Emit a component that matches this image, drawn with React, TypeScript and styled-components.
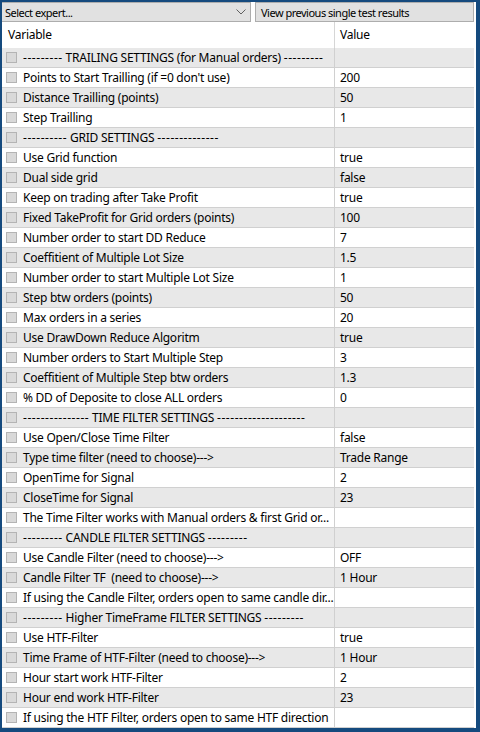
import { FC, Fragment } from 'react';
import styled, { createGlobalStyle } from 'styled-components';

const GlobalStyle = createGlobalStyle`
    html, body {
        margin: 0;
        padding: 0;
        background: #ffffff;
    }
    body {
        font-family: 'Noto Sans', 'Liberation Sans', sans-serif;
        font-size: 12px;
        color: #000000;
    }
`;

const Window = styled.div`
    width: 480px;
    height: 732px;
    box-sizing: border-box;
    border-top: 2px solid #154a7e;
    border-left: 2px solid #154a7e;
    border-right: 4px solid #154a7e;
    border-bottom: 4px solid #154a7e;
    display: flex;
    flex-direction: column;
    background: #ffffff;
    overflow: hidden;
`;

const Toolbar = styled.div`
    height: 20px;
    display: flex;
    gap: 4px;
    padding-right: 2px;
    background: #ffffff;
`;

const SelectBox = styled.div`
    width: 251px;
    box-sizing: border-box;
    border: 1px solid #adadad;
    background: #e1e1e1;
    display: flex;
    align-items: center;
    justify-content: space-between;
    padding: 0 4px 0 4px;
    margin-left: -2px;
`;

const ToolButton = styled.div`
    flex: 1;
    box-sizing: border-box;
    border: 1px solid #adadad;
    background: #e1e1e1;
    display: flex;
    align-items: center;
    padding-left: 5px;
`;

const Label = styled.span`
    font-size: 11px;
    line-height: 1;
    white-space: nowrap;
    letter-spacing: -0.5px;
`;

const Grid = styled.div`
    display: grid;
    grid-template-columns: 333px 1fr;
    margin-right: 2px;
`;

const HeadCell = styled.div<{ $first?: boolean }>`
    height: 26px;
    box-sizing: border-box;
    display: flex;
    align-items: center;
    padding-left: ${p => (p.$first ? '6px' : '5px')};
    padding-bottom: 1px;
    border-right: ${p => (p.$first ? '1px solid #d6d6d6' : 'none')};
    font-size: 12px;
    letter-spacing: -0.25px;
    white-space: nowrap;
`;

const Cell = styled.div<{ $shade: boolean; $first?: boolean }>`
    height: 20px;
    box-sizing: border-box;
    display: flex;
    align-items: center;
    gap: 6px;
    padding-left: ${p => (p.$first ? '4px' : '5px')};
    background: ${p => (p.$shade ? '#e8e8e8' : '#ffffff')};
    border-bottom: 1px solid #d0d0d0;
    border-right: ${p => (p.$first ? '1px solid #d0d0d0' : 'none')};
    font-size: 12px;
    letter-spacing: -0.25px;
    white-space: nowrap;
    overflow: hidden;
`;

const Dashes = styled.span`
    letter-spacing: 0.55px;
`;

const Check = styled.span`
    width: 11px;
    height: 11px;
    flex: none;
    box-sizing: border-box;
    border: 1px solid #b4b4b4;
    background: #d9d9d9;
`;

type Row = [string, string];

const rows: Row[] = [
    ['--------- TRAILING SETTINGS (for Manual orders) ---------', ''],
    ["Points to Start Trailling (if =0 don't use)", '200'],
    ['Distance Trailling (points)', '50'],
    ['Step Trailling', '1'],
    ['---------- GRID SETTINGS --------------', ''],
    ['Use Grid function', 'true'],
    ['Dual side grid', 'false'],
    ['Keep on trading after Take Profit', 'true'],
    ['Fixed TakeProfit for Grid orders (points)', '100'],
    ['Number order to start DD Reduce', '7'],
    ['Coeffitient of Multiple Lot Size', '1.5'],
    ['Number order to start Multiple Lot Size', '1'],
    ['Step btw orders (points)', '50'],
    ['Max orders in a series', '20'],
    ['Use DrawDown Reduce Algoritm', 'true'],
    ['Number orders to Start Multiple Step', '3'],
    ['Coeffitient of Multiple Step btw orders', '1.3'],
    ['% DD of Deposite to close ALL orders', '0'],
    ['--------------- TIME FILTER SETTINGS --------------------', ''],
    ['Use Open/Close Time Filter', 'false'],
    ['Type time filter (need to choose)--->', 'Trade Range'],
    ['OpenTime for Signal', '2'],
    ['CloseTime for Signal', '23'],
    ['The Time Filter works with Manual orders & first Grid or...', ''],
    ['--------- CANDLE FILTER SETTINGS ---------', ''],
    ['Use Candle Filter (need to choose)--->', 'OFF'],
    ['Candle Filter TF \u00a0(need to choose)--->', '1 Hour'],
    ['If using the Candle Filter, orders open to same candle dir...', ''],
    ['--------- Higher TimeFrame FILTER SETTINGS ---------', ''],
    ['Use HTF-Filter', 'true'],
    ['Time Frame of HTF-Filter (need to choose)--->', '1 Hour'],
    ['Hour start work HTF-Filter', '2'],
    ['Hour end work HTF-Filter', '23'],
    ['If using the HTF Filter, orders open to same HTF direction', ''],
];

// section headers use long dash runs, which are wider in the original font
const renderName = (name: string) =>
    name.split(/(-{4,})/).map((part, j) =>
        /^-{4,}$/.test(part) ? <Dashes key={j}>{part}</Dashes> : <Fragment key={j}>{part}</Fragment>,
    );

const Chevron: FC = () => (
    <svg width="10" height="6" viewBox="0 0 10 6">
        <path d="M0.5 0.5 L5 5 L9.5 0.5" fill="none" stroke="#606060" strokeWidth="1" />
    </svg>
);

export default function App() {
    return (
        <>
            <GlobalStyle />
            <Window>
                <Toolbar>
                    <SelectBox>
                        <Label>Select expert...</Label>
                        <Chevron />
                    </SelectBox>
                    <ToolButton>
                        <Label>View previous single test results</Label>
                    </ToolButton>
                </Toolbar>
                <Grid>
                    <HeadCell $first>Variable</HeadCell>
                    <HeadCell>Value</HeadCell>
                    {rows.map(([name, value], i) => (
                        <Fragment key={i}>
                            <Cell $shade={i % 2 === 0} $first>
                                <Check />
                                <span>{renderName(name)}</span>
                            </Cell>
                            <Cell $shade={i % 2 === 0}>{value}</Cell>
                        </Fragment>
                    ))}
                </Grid>
            </Window>
        </>
    );
}
